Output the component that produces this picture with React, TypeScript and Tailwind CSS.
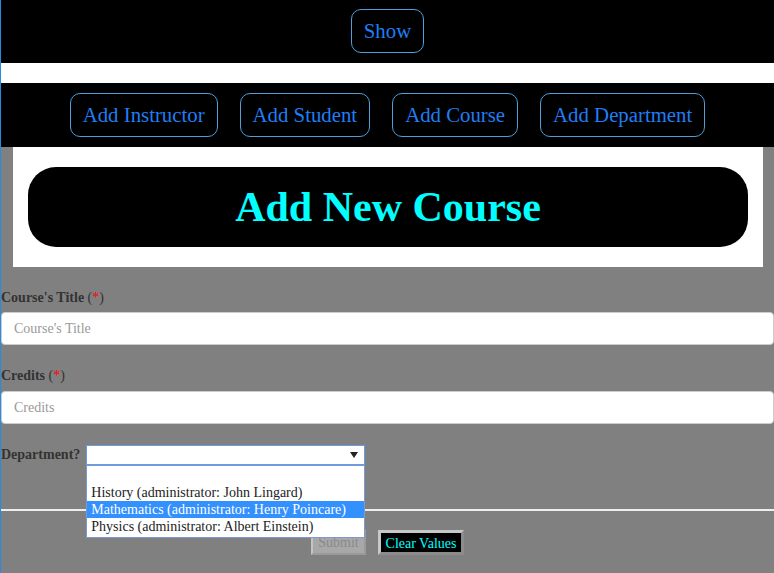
import { useState } from "react";

const NAV = ["Add Instructor", "Add Student", "Add Course", "Add Department"];

const DEPTS = [
  "",
  "History (administrator: John Lingard)",
  "Mathematics (administrator: Henry Poincare)",
  "Physics (administrator: Albert Einstein)",
];

export default function App() {
  const [hover] = useState(2);
  const serif = { fontFamily: '"Liberation Serif", "Times New Roman", serif' };

  return (
    <div
      style={serif}
      className="min-h-screen border-l border-[#2a8ae0] bg-[#808080]"
    >
      {/* top bar */}
      <div className="flex h-[63px] items-start justify-center bg-black pt-[9px]">
        <NavBtn label="Show" />
      </div>
      <div className="h-[20px] bg-white" />
      <div className="flex h-[64px] items-start justify-center gap-[22px] bg-black pt-[10px]">
        {NAV.map((n) => (
          <NavBtn key={n} label={n} />
        ))}
      </div>

      {/* heading */}
      <div className="ml-[12px] mr-[11px] bg-white px-[15px] py-[20px]">
        <div className="flex h-[80px] items-center justify-center rounded-[28px] bg-black">
          <h1 className="text-[42px] font-bold leading-none text-[#00ffff]">Add New Course</h1>
        </div>
      </div>

      {/* form */}
      <form className="pt-[20px] text-[14px] text-[#333]">
        <Label text="Course's Title" required />
        <input
          placeholder="Course's Title"
          style={serif}
          className="mt-[4px] block h-[33px] w-full rounded-[4px] border border-[#ccc] bg-white px-[12px] text-[14px] placeholder:text-[#999]"
        />
        <div className="mt-[20px]">
          <Label text="Credits" required />
        </div>
        <input
          placeholder="Credits"
          style={serif}
          className="mt-[5px] block h-[33px] w-full rounded-[4px] border border-[#ccc] bg-white px-[12px] text-[14px] placeholder:text-[#999]"
        />

        <div className="mt-[20px] flex items-center gap-[6px]">
          <span className="font-bold leading-[21px]">Department?</span>
          <div className="relative">
            <div className="flex h-[20px] w-[279px] items-center justify-end border border-[#6a9be6] bg-white pr-[6px]">
              <svg width="8" height="6" viewBox="0 0 8 6">
                <path d="M0 0h8L4 6z" fill="#222" />
              </svg>
            </div>
            {/* open option list */}
            <ul className="absolute left-0 top-[20px] z-10 w-[279px] border border-[#7b9ad0] bg-white pb-[2px] pt-[1px] text-[14px] leading-[17px] text-[#222]">
              {DEPTS.map((d, idx) => (
                <li
                  key={idx}
                  className={`h-[17px] px-[4px] ${idx === 0 ? "h-[17.5px]" : ""} ${
                    idx === hover ? "bg-[#3390ff] text-white" : ""
                  }`}
                >
                  {d}
                </li>
              ))}
            </ul>
          </div>
        </div>

        <hr className="mt-[44px] border-0 border-t-[2px] border-[#eee]" />

        <div className="mt-[19px] flex justify-center gap-[12px]">
          <button
            type="button"
            disabled
            style={serif}
            className="h-[25px] w-[55px] border-2 border-t-[#c4c4c4] border-l-[#c4c4c4] border-r-[#9a9a9a] border-b-[#9a9a9a] bg-[#a8a8a8] text-[14px] text-[#8a8a8a]"
          >
            Submit
          </button>
          <button
            type="button"
            style={serif}
            className="h-[25px] w-[86px] border-[3px] border-t-[#c8c8c8] border-l-[#c8c8c8] border-r-[#8c8c8c] border-b-[#8c8c8c] bg-black text-[14px] text-[#00ffff]"
          >
            Clear Values
          </button>
        </div>
      </form>
    </div>
  );
}

function NavBtn({ label }: { label: string }) {
  return (
    <button
      type="button"
      className="h-[44px] rounded-[10px] border border-[#4d9ed9] bg-black px-[12px] text-[20.8px] leading-none text-[#1f7ef5]"
      style={{ fontFamily: '"Liberation Serif", "Times New Roman", serif' }}
    >
      {label}
    </button>
  );
}

function Label({ text, required }: { text: string; required?: boolean }) {
  return (
    <div className="leading-[21px]">
      <span className="font-bold">{text}</span>
      {required && (
        <span>
          {" "}(<span className="text-[#ff0000]">*</span>)
        </span>
      )}
    </div>
  );
}
